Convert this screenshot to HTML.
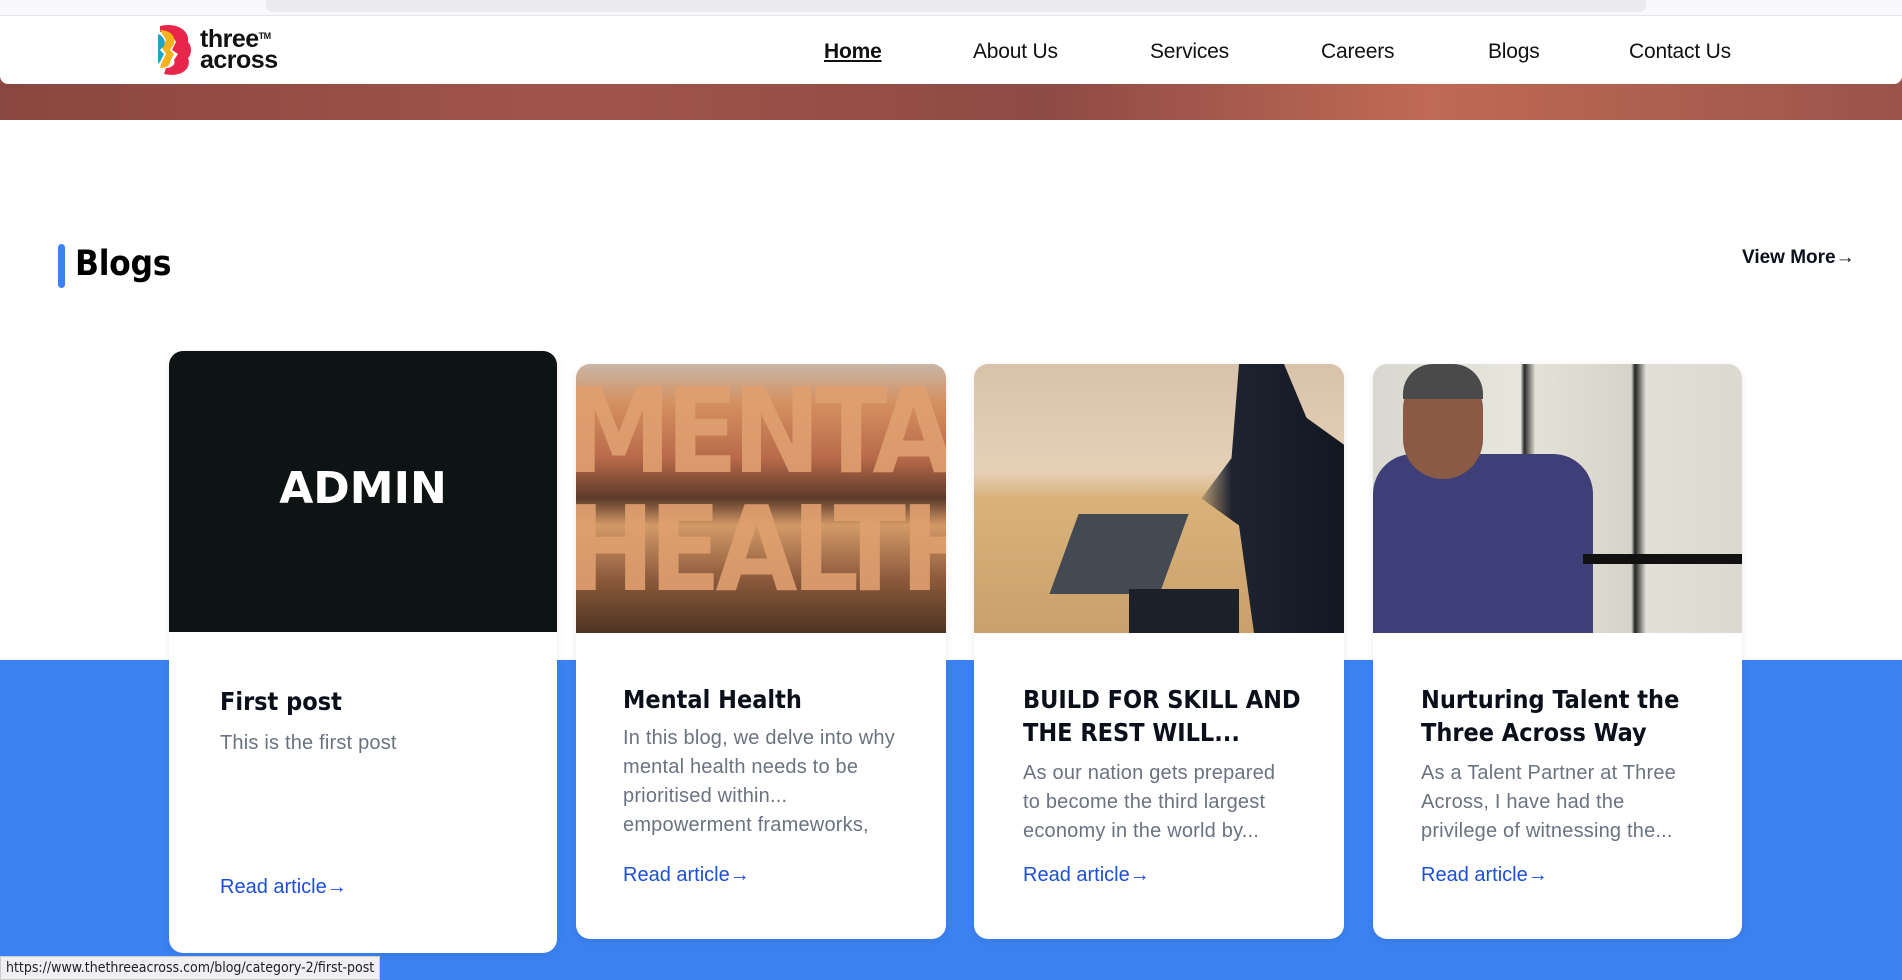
<!DOCTYPE html>
<html><head><meta charset="utf-8">
<style>
*{margin:0;padding:0;box-sizing:border-box}
body{width:1902px;height:980px;overflow:hidden;background:#fff;font-family:"Liberation Sans",sans-serif;position:relative}
.abs{position:absolute}
.nav a{position:absolute;top:40px;font-size:21px;color:#111;text-decoration:none;letter-spacing:-0.2px}
.card{position:absolute;background:#fff;border-radius:14px;overflow:hidden;box-shadow:0 2px 8px rgba(0,0,0,.08)}
.card .img{position:absolute;left:0;top:0;width:100%}
.t{position:absolute;left:47px;font-weight:bold;font-size:25px;color:#0b0f1a;line-height:33px;font-family:"DejaVu Sans Condensed","Liberation Sans",sans-serif}
.d{position:absolute;left:47px;font-size:20px;color:#6b7280;line-height:29px;width:275px;letter-spacing:0.2px}
.r{position:absolute;left:47px;font-size:20px;color:#1d4ed8}
</style></head><body>
<div class="abs" style="left:0;top:0;width:1902px;height:16px;background:#f9f9fb;border-bottom:1px solid #e5e5ea"></div>
<div class="abs" style="left:266px;top:0;width:1380px;height:12px;background:#ececef;border-radius:0 0 6px 6px"></div>
<div class="abs" style="left:0;top:70px;width:1902px;height:50px;background:linear-gradient(90deg,#8a4640 0%,#a0554a 30%,#8e4a45 55%,#c06a55 75%,#9a544a 100%)"></div>
<div class="abs" style="left:0;top:16px;width:1902px;height:68px;background:#fff;border-radius:0 0 8px 8px"></div>
<svg class="abs" style="left:156px;top:24px" width="38" height="52" viewBox="0 0 38 52">
<path d="M4 2 C20 -2 34 6 32 18 C36 22 36 30 32 34 C36 44 26 54 8 50 L10 44 C16 44 20 40 18 36 L22 30 L16 26 L20 18 C16 10 10 8 4 8Z" fill="#e8254a"/>
<path d="M4 6 C14 6 20 12 18 20 L14 26 L18 30 L14 38 C14 42 10 44 4 44 L6 38 L10 30 L6 24 L10 16Z" fill="#f6b21b"/>
<path d="M2 10 C8 12 10 18 8 22 L4 26 L8 30 L4 38 L2 40Z" fill="#1fa3c9"/>
</svg>
<div class="abs" style="left:200px;top:29px;font-weight:bold;font-size:25px;line-height:21px;color:#111;letter-spacing:-0.5px">three<sup style="font-size:9px;vertical-align:top;position:relative;top:-3px">TM</sup><br>across</div>
<div class="nav">
<a style="left:824px;font-weight:bold;text-decoration:underline">Home</a>
<a style="left:973px">About Us</a>
<a style="left:1150px">Services</a>
<a style="left:1321px">Careers</a>
<a style="left:1488px">Blogs</a>
<a style="left:1629px">Contact Us</a>
</div>
<div class="abs" style="left:0;top:660px;width:1902px;height:320px;background:#3b82f0"></div>
<div class="abs" style="left:58px;top:244px;width:7px;height:44px;background:#3b82f6;border-radius:4px"></div>
<div class="abs" style="left:75px;top:244px;font-size:35px;font-weight:bold;color:#000;font-family:'DejaVu Sans Condensed','Liberation Sans',sans-serif;letter-spacing:-0.3px">Blogs</div>
<div class="abs" style="left:1742px;top:247px;font-size:19px;font-weight:bold;color:#0b0f1a">View More<span style="font-weight:normal">→</span></div>
<div class="card" style="left:169px;top:351px;width:388px;height:602px">
<div class="img" style="height:281px;background:#0e1414"><div style="position:absolute;left:0;width:100%;top:112px;text-align:center;color:#fff;font-size:44px;font-weight:bold;letter-spacing:0;font-family:'DejaVu Sans','Liberation Sans',sans-serif">ADMIN</div></div>
<div class="t" style="top:334px;left:51px">First post</div>
<div class="d" style="top:378px;left:51px">This is the first post</div>
<div class="r" style="top:525px;left:51px">Read article→</div>
</div>
<div class="card" style="left:576px;top:364px;width:370px;height:575px">
<div class="img" style="height:269px;background:linear-gradient(180deg,#c9b6a6 0%,#d48f5e 15%,#b86a4a 35%,#5c3a2a 50%,#d39a66 60%,#8c5a3c 80%,#4e3422 100%)">
<div style="position:absolute;left:-10px;top:8px;font-size:118px;font-weight:bold;color:#e0a070;letter-spacing:-6px;line-height:118px;font-family:'DejaVu Sans Condensed',sans-serif;opacity:.9">MENTA<br>HEALTH</div></div>
<div class="t" style="top:319px;left:47px">Mental Health</div>
<div class="d" style="top:360px">In this blog, we delve into why mental health needs to be prioritised within... empowerment frameworks,</div>
<div class="r" style="top:500px">Read article→</div>
</div>
<div class="card" style="left:974px;top:364px;width:370px;height:575px">
<div class="img" style="height:269px;background:linear-gradient(180deg,#d8c2aa 0%,#e6d0b6 40%,#d9b27a 50%,#caa06a 100%)">
<div style="position:absolute;left:220px;top:0;width:150px;height:269px;background:linear-gradient(90deg,transparent 0,#1e2430 25%,#121722 100%);clip-path:polygon(30% 0,60% 0,75% 20%,100% 30%,100% 100%,40% 100%,30% 60%,5% 50%,25% 35%)"></div>
<div style="position:absolute;left:90px;top:150px;width:110px;height:80px;background:#444a52;transform:skew(-20deg)"></div>
<div style="position:absolute;left:155px;top:225px;width:110px;height:44px;background:#1c2029"></div>
</div>
<div class="t" style="top:319px;left:49px">BUILD FOR SKILL AND THE REST WILL...</div>
<div class="d" style="top:395px;left:49px">As our nation gets prepared to become the third largest economy in the world by...</div>
<div class="r" style="top:500px;left:49px">Read article→</div>
</div>
<div class="card" style="left:1373px;top:364px;width:369px;height:575px">
<div class="img" style="height:269px;background:linear-gradient(90deg,#d8d8d0 0%,#e8e6dc 40%,#2a2a2a 41%,#e4e2d6 44%,#d6d4c8 70%,#222 71%,#e2e0d6 74%,#dcdad0 100%)">
<div style="position:absolute;left:0;top:90px;width:220px;height:179px;background:#3e3f78;border-radius:40px 40px 0 0"></div>
<div style="position:absolute;left:30px;top:5px;width:80px;height:110px;background:#8a5a44;border-radius:40px"></div>
<div style="position:absolute;left:30px;top:0;width:80px;height:35px;background:#4a4a4a;border-radius:30px 30px 0 0"></div>
<div style="position:absolute;left:210px;top:190px;width:159px;height:10px;background:#111"></div>
</div>
<div class="t" style="top:319px;left:48px">Nurturing Talent the Three Across Way</div>
<div class="d" style="top:395px;left:48px">As a Talent Partner at Three Across, I have had the privilege of witnessing the...</div>
<div class="r" style="top:500px;left:48px">Read article→</div>
</div>
<div class="abs" style="left:0;top:956px;height:24px;padding:3px 5px;background:#f0f0f4;border:1px solid #ccc;font-size:14px;color:#222;font-family:'DejaVu Sans Condensed',sans-serif">https://www.thethreeacross.com/blog/category-2/first-post</div>
</body></html>
